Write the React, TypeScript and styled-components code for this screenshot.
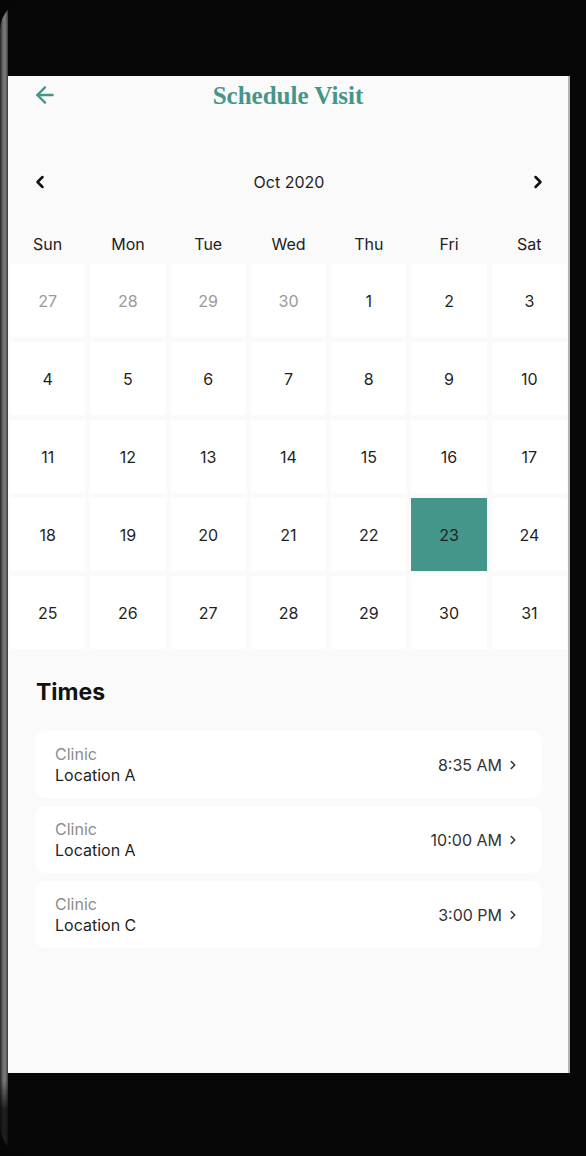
import { ArrowLeft, ChevronLeft, ChevronRight } from 'lucide-react';
import styled, { createGlobalStyle } from 'styled-components';

const teal = '#45968a';

const weekDays = ['Sun', 'Mon', 'Tue', 'Wed', 'Thu', 'Fri', 'Sat'];

interface Day {
  label: number;
  muted?: boolean;
}

const days: Day[] = [
  ...[27, 28, 29, 30].map(d => ({ label: d, muted: true })),
  ...Array.from({ length: 31 }, (_, i) => ({ label: i + 1 }))
];

const selectedDay = 23;

const times = [
  { place: 'Location A', time: '8:35 AM' },
  { place: 'Location A', time: '10:00 AM' },
  { place: 'Location C', time: '3:00 PM' }
];

const App = () => {
  return (
    <>
      <GlobalStyle />
      <Frame>
        <Screen>
          <Header>
            <BackButton aria-label='Back'>
              <ArrowLeft size={26} strokeWidth={2.2} color={teal} />
            </BackButton>
            <Title>Schedule Visit</Title>
          </Header>

          <MonthRow>
            <NavButton aria-label='Previous month'>
              <ChevronLeft size={20} strokeWidth={3} />
            </NavButton>
            <MonthLabel>Oct 2020</MonthLabel>
            <NavButton aria-label='Next month'>
              <ChevronRight size={20} strokeWidth={3} />
            </NavButton>
          </MonthRow>

          <WeekRow>
            {weekDays.map(w => (
              <WeekDay key={w}>{w}</WeekDay>
            ))}
          </WeekRow>

          <DayGrid>
            {days.map((d, i) => (
              <DayCell
                key={i}
                $muted={d.muted}
                $selected={!d.muted && d.label === selectedDay}
              >
                {d.label}
              </DayCell>
            ))}
          </DayGrid>

          <SectionTitle>Times</SectionTitle>
          <TimeList>
            {times.map((t, i) => (
              <TimeCard key={i}>
                <Place>
                  <PlaceType>Clinic</PlaceType>
                  <PlaceName>{t.place}</PlaceName>
                </Place>
                <TimeValue>
                  {t.time}
                  <ChevronRight size={14} strokeWidth={2.6} />
                </TimeValue>
              </TimeCard>
            ))}
          </TimeList>
        </Screen>
      </Frame>
    </>
  );
};

const GlobalStyle = createGlobalStyle`
  html, body {
    margin: 0;
    padding: 0;
    background: #060606;
  }
  body {
    font-family: Inter, Roboto, "Noto Sans", sans-serif;
  }
  button {
    font: inherit;
  }
`;

const Frame = styled.div`
  width: 586px;
  height: 1156px;
  box-sizing: border-box;
  padding: 76px 0 0 8px;
  background:
    linear-gradient(to bottom, transparent 0, transparent 1080px, rgba(7, 7, 7, 0.8) 1110px),
    linear-gradient(to right, #262626 0, #6e6e6e 3px, #7d7d7d 5px, #3a3a3a 8px, transparent 8px),
    #070707;
  border-radius: 30px 0 0 30px;
  overflow: hidden;
`;

const Screen = styled.div`
  width: 562px;
  height: 997px;
  box-sizing: border-box;
  background: #fafafa;
  border-right: 2px solid #b4b4b4;
  display: flex;
  flex-direction: column;
`;

const Header = styled.div`
  height: 40px;
  display: flex;
  align-items: center;
  justify-content: center;
  position: relative;
`;

const BackButton = styled.button`
  position: absolute;
  left: 24px;
  top: 6px;
  padding: 0;
  border: none;
  background: none;
  display: flex;
`;

const Title = styled.h1`
  margin: 0;
  font-family: "Liberation Serif", serif;
  font-weight: 700;
  font-size: 25px;
  color: ${teal};
`;

const MonthRow = styled.div`
  margin-top: 50px;
  height: 32px;
  padding: 0 20px 0 22px;
  display: flex;
  align-items: center;
  justify-content: space-between;
`;

const NavButton = styled.button`
  padding: 0;
  border: none;
  background: none;
  color: #111;
  display: flex;
`;

const MonthLabel = styled.span`
  font-size: 16px;
  color: #1f1f1f;
`;

const WeekRow = styled.div`
  margin-top: 30px;
  height: 32px;
  padding: 0 1px 0 2px;
  display: grid;
  grid-template-columns: repeat(7, 1fr);
  column-gap: 5px;
  align-items: center;
`;

const WeekDay = styled.span`
  text-align: center;
  font-size: 16px;
  color: #222;
`;

const DayGrid = styled.div`
  margin-top: 4px;
  padding: 0 1px 0 2px;
  display: grid;
  grid-template-columns: repeat(7, 1fr);
  grid-auto-rows: 73px;
  gap: 5px;
`;

const DayCell = styled.div<{ $muted?: boolean; $selected?: boolean }>`
  display: flex;
  align-items: center;
  justify-content: center;
  font-size: 16px;
  background: ${p => (p.$selected ? teal : '#ffffff')};
  color: ${p => (p.$muted ? '#9a9a9a' : '#1f1f1f')};
`;

const SectionTitle = styled.h2`
  margin: 29px 0 0 28px;
  height: 28px;
  line-height: 28px;
  font-size: 23px;
  font-weight: 700;
  color: #111;
`;

const TimeList = styled.div`
  margin: 25px 26px 0 27px;
  display: flex;
  flex-direction: column;
  gap: 8px;
`;

const TimeCard = styled.div`
  height: 67px;
  box-sizing: border-box;
  padding: 0 22px 0 20px;
  background: #ffffff;
  border-radius: 10px;
  display: flex;
  align-items: center;
  justify-content: space-between;
`;

const Place = styled.div`
  display: flex;
  flex-direction: column;
  gap: 1px;
`;

const PlaceType = styled.span`
  font-size: 16px;
  color: #8d8d8d;
`;

const PlaceName = styled.span`
  font-size: 16px;
  color: #1f1f1f;
`;

const TimeValue = styled.span`
  display: flex;
  align-items: center;
  gap: 4px;
  font-size: 16px;
  color: #333;
`;

export default App;
